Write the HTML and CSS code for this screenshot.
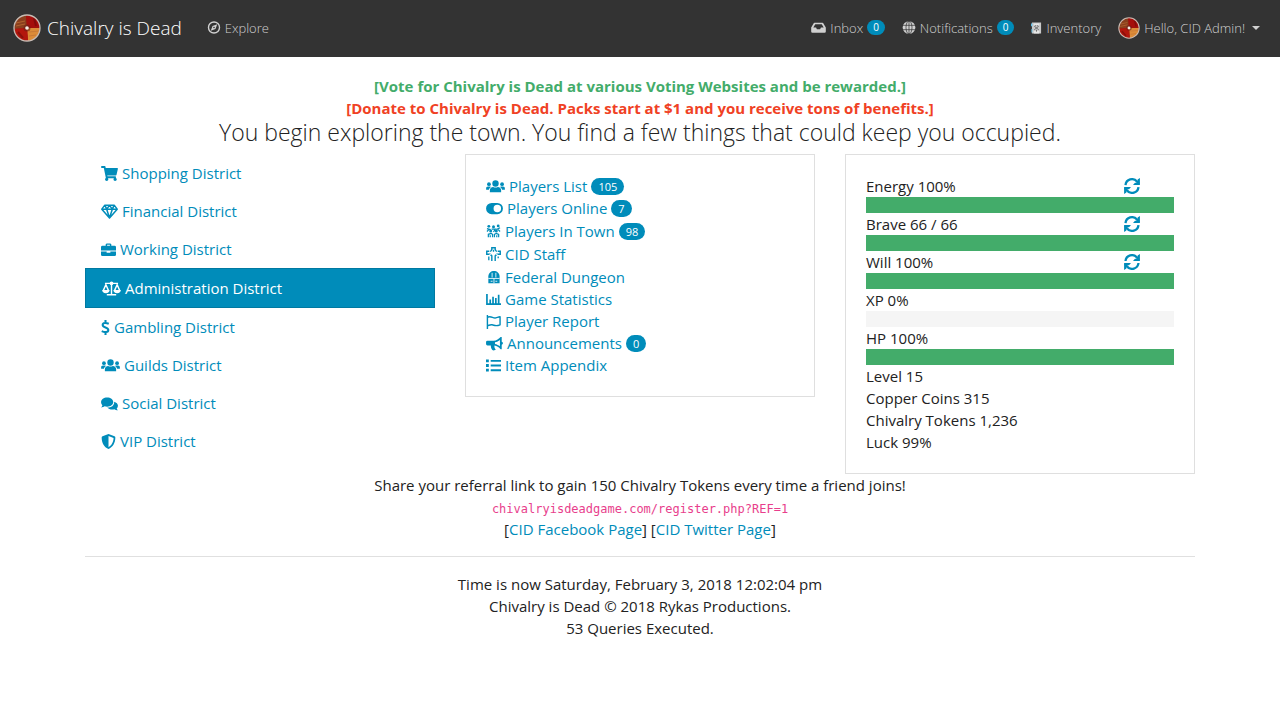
FILE: index.html
```html
<!DOCTYPE html>
<html lang="en">
<head>
<meta charset="utf-8">
<meta name="viewport" content="width=device-width, initial-scale=1">
<title>Chivalry is Dead</title>
<link rel="stylesheet" href="styles.css">
</head>
<body>
<svg class="sprite" aria-hidden="true">
  <symbol id="crest" viewBox="0 0 28 28">
    <circle cx="14" cy="14" r="13" fill="#9c1510"/>
    <path d="M14 14L1 15A13 13 0 0 1 13 1z" fill="#8a3f1e"/>
    <path d="M14 14L13 1A13 13 0 0 1 27 13z" fill="#a50f0c"/>
    <path d="M14 14L27 14A13 13 0 0 1 15 27z" fill="#dc8c38"/>
    <path d="M14 14L15 27A13 13 0 0 1 1 15z" fill="#b3160d"/>
    <path d="M3 9l9-2M3 12l9-2M16 18l10-1M16 22l7-1" stroke="#c27235" stroke-width="1" opacity=".7"/>
    <path d="M21 4l2 8M5 18l5 6" stroke="#650909" stroke-width="2" opacity=".5"/>
    <circle cx="14" cy="14" r="3.500" fill="#692119" opacity=".6"/>
    <circle cx="14" cy="14" r="1.800" fill="#f5efe5"/>
    <circle cx="14" cy="14" r="13" fill="none" stroke="#c8bcb4" stroke-width="1.300"/>
  </symbol>
  <symbol id="compass" viewBox="0 0 16 16">
    <circle cx="8" cy="8" r="6.800" fill="none" stroke="currentColor" stroke-width="1.700"/>
    <path fill="currentColor" fill-rule="evenodd" d="M12 4L9.800 9.800 4 12l2.200-5.800zM8 7a1 1 0 1 0 0 2 1 1 0 0 0 0-2z"/>
  </symbol>
  <symbol id="inbox" viewBox="0 0 18 16">
    <path fill="currentColor" fill-rule="evenodd" d="M4.200 2h9.600l.9.600L18 8v5a1.500 1.500 0 0 1-1.500 1.500h-15A1.500 1.500 0 0 1 0 13V8l3.300-5.400zM5 4L2.600 8H6l1 2h4l1-2h3.400L13 4z"/>
  </symbol>
  <symbol id="globe" viewBox="0 0 16 16">
    <circle cx="8" cy="8" r="7.800" fill="currentColor"/>
    <path d="M0 5.300h16M0 10.700h16M8 0v16" stroke="#333" stroke-width=".9"/>
    <ellipse cx="8" cy="8" rx="3.700" ry="8" fill="none" stroke="#333" stroke-width=".9"/>
  </symbol>
  <symbol id="chest" viewBox="0 0 12 14">
    <path fill="#c9c9c9" d="M1 1h10v12H1z"/>
    <path fill="#62c0e8" d="M0 2h1.500v3H0zM.5 8h1v4h-1z"/>
    <path fill="#e6e6e6" d="M3 2h6v2H3zM3 10h6v3H3z"/>
    <path d="M3.500 5l5 4M8.500 5l-5 4M5 4v1M7 4v1M6 9v2" stroke="#666" stroke-width="1"/>
  </symbol>
  <symbol id="cart" viewBox="0 0 576 512">
    <path fill="currentColor" d="M528.120 301.319l47.273-208C578.806 78.301 567.391 64 551.990 64H159.208l-9.166-44.810C147.758 8.021 137.930 0 126.529 0H24C10.745 0 0 10.745 0 24v16c0 13.255 10.745 24 24 24h69.883l70.248 343.435C147.325 417.100 136 435.222 136 456c0 30.928 25.072 56 56 56s56-25.072 56-56c0-15.674-6.447-29.835-16.824-40h209.647C430.447 426.165 424 440.326 424 456c0 30.928 25.072 56 56 56s56-25.072 56-56c0-22.172-12.888-41.332-31.579-50.405l5.517-24.276c3.413-15.018-8.002-29.319-23.403-29.319H218.117l-6.545-32h293.145c11.206 0 20.920-7.754 23.403-18.681z"/>
  </symbol>
  <symbol id="gem" viewBox="0 0 18 16">
    <path fill="none" stroke="currentColor" stroke-width="1.600" stroke-linejoin="round" d="M4 1.200h10L17.200 5.500 9 15 .8 5.500zM1 5.500h16M4 1.200l2 4.300L9 15l3-9.500 2-4.300M6 5.500l3-4 3 4"/>
  </symbol>
  <symbol id="briefcase" viewBox="0 0 16 16">
    <path fill="currentColor" fill-rule="evenodd" d="M5 4V2.500L6 1.500h4l1 1V4h3.500A1.500 1.500 0 0 1 16 5.500V9H0V5.500A1.500 1.500 0 0 1 1.500 4zM6.500 3v1h3V3zM0 10h6v1.500h4V10h6v3.500a1.500 1.500 0 0 1-1.500 1.500h-13A1.500 1.500 0 0 1 0 13.500z"/>
  </symbol>
  <symbol id="scale" viewBox="0 0 20 16">
    <path fill="none" stroke="currentColor" stroke-width="1.500" d="M3 2.500h14M10 1v13M5 14.700h10M1.300 10L4 4l2.700 6M13.300 10L16 4l2.700 6"/>
    <circle cx="10" cy="2.500" r="2" fill="currentColor"/>
    <path fill="currentColor" d="M0 9.500h8c0 2-1.600 3.500-4 3.500S0 11.500 0 9.500zM12 9.500h8c0 2-1.600 3.500-4 3.500s-4-1.500-4-3.500z"/>
  </symbol>
  <symbol id="dollar" viewBox="0 0 9 16">
    <path fill="none" stroke="currentColor" stroke-width="2.200" d="M8 4C5 2.700 1.500 2.700 1.500 5.300c0 3 6 2.300 6 5.300 0 2.800-4 2.800-7 1.300M4.500 0v3.500M4.500 12.500V16"/>
  </symbol>
  <symbol id="users" viewBox="0 0 20 16">
    <g fill="currentColor"><circle cx="10" cy="4.800" r="3.400"/><circle cx="3" cy="5.500" r="2"/><circle cx="17" cy="5.500" r="2"/>
    <path d="M4 14v-2c0-2 1.500-3.500 3.500-3.500C9 9.300 11 9.300 12.500 8.500 14.500 8.500 16 10 16 12v2zM0 11.500V10c0-1.200.8-2 2-2h2c.5 0 1 .2 1.300.5C4 9.200 3.200 10.200 3 11.500zM20 11.500V10c0-1.200-.8-2-2-2h-2c-.5 0-1 .2-1.300.5 1.300.7 2.100 1.700 2.300 3z"/></g>
  </symbol>
  <symbol id="comments" viewBox="0 0 18 16">
    <path fill="currentColor" d="M6.500 1.500C10.100 1.500 13 3.700 13 6.500s-2.900 5-6.500 5c-1 0-1.900-.2-2.700-.5-1 .7-2.300 1.200-3.800 1.200.7-.7 1.200-1.400 1.400-2.300C.5 9 0 7.800 0 6.500c0-2.800 2.900-5 6.500-5zM14 6c2.400.7 4 2.300 4 4.300 0 1.200-.5 2.200-1.300 3 .2.800.7 1.400 1.300 2-1.500 0-2.800-.5-3.700-1.100-.8.300-1.600.3-2.300.3-2.300 0-4.300-.9-5.400-2.200C10.900 12.300 14.300 10.200 14 6z"/>
  </symbol>
  <symbol id="shield" viewBox="0 0 16 16">
    <path fill="currentColor" fill-rule="evenodd" d="M8 0l6.400 2.500c.6.200.9.700.9 1.300 0 6-3 10.300-6.700 12a2 2 0 0 1-1.200 0C3.700 14.300.7 10 .7 3.800c0-.6.300-1.100.9-1.300zM8 2v12c2.800-1.400 5.200-5 5.400-9.800z"/>
  </symbol>
  <symbol id="toggle" viewBox="0 0 18 16">
    <path fill="currentColor" fill-rule="evenodd" d="M6 2h6a6 6 0 0 1 0 12H6A6 6 0 0 1 6 2zM12 4a4 4 0 1 0 0 8 4 4 0 0 0 0-8z"/>
  </symbol>
  <symbol id="crowd" viewBox="0 0 16 16">
    <g fill="currentColor"><circle cx="3" cy="2.500" r="1.500"/><circle cx="8" cy="3" r="1.600"/><circle cx="13" cy="2" r="1.500"/><circle cx="5" cy="7.500" r="1.600"/><circle cx="11" cy="7.500" r="1.600"/></g>
    <path fill="none" stroke="currentColor" stroke-width="1.300" d="M1 5l4 1M15 4l-4 2M6 5.500h4l-2 3M1 8l2-2M13 6l2 2M2.500 14v-3l3-1 1.500 1v3M9 14v-3l2-1 2.500 1v3M4.500 12v2M11.500 12v2"/>
  </symbol>
  <symbol id="cross" viewBox="0 0 16 16">
    <path fill="none" stroke="currentColor" stroke-width="1.500" d="M6.200 15V9.500L4.500 7.800H.8V4.500h4L6.200 3V.8h3.600V3l1.400 1.500h4v3.300h-3.700L9.800 9.500V15"/>
    <path fill="none" stroke="currentColor" stroke-width="1.400" d="M3 10v4M13 10v2M8 3v2"/>
    <path stroke="#fff" stroke-width="1" d="M4 3v3M12 3v3M3 9l3-2M13 9l-3-2"/>
  </symbol>
  <symbol id="dungeon" viewBox="0 0 16 16">
    <path fill="currentColor" d="M2.500 14V7c0-8 12-8 12 0v7z"/>
    <path fill="none" stroke="#fff" stroke-width=".9" d="M6.500 3v5M10.500 3v5M2.500 9h12M5 12h2M10 12h2M8.500 9v5"/>
  </symbol>
  <symbol id="chart" viewBox="0 0 16 16">
    <path fill="none" stroke="currentColor" stroke-width="1.800" d="M1 2v11h15M4.500 12V8M7.500 12V5M10.500 12V6.500M13.500 12V3"/>
  </symbol>
  <symbol id="flag" viewBox="0 0 16 16">
    <path fill="none" stroke="currentColor" stroke-width="1.500" stroke-linejoin="round" d="M1.500 1v15M1.500 3.500c4-2 6 1.500 9 .6 1.700-.4 2.800-.9 4.500-1.100v8.500c-5 2-6 .3-8.500 0-2-.2-3 .3-5 1"/>
  </symbol>
  <symbol id="bullhorn" viewBox="0 0 18 16">
    <path fill="currentColor" fill-rule="evenodd" d="M1.500 5H8c3-.1 5.800-2 7.500-4h1.200v5.200c1.700.4 1.700 2.600 0 3V14h-1.200c-1.700-2-4.200-3.500-6.500-3.800-.3 2 .4 3.300 1.500 4.300-.8 1-3 1.100-3.800.5C5.500 13.700 5 12 5.100 10H1.500A1.500 1.500 0 0 1 0 8.500v-2A1.500 1.500 0 0 1 1.500 5zM9.500 6.700v1.800c2 .4 3.800 1.300 5.300 2.500V4.200c-1.500 1.300-3.300 2.100-5.300 2.500z"/>
  </symbol>
  <symbol id="list" viewBox="0 0 16 16">
    <path fill="currentColor" d="M0 1.500h3v3H0zM0 6.500h3v3H0zM0 11.500h3v3H0zM5 2h11v2H5zM5 7h11v2H5zM5 12h11v2H5z"/>
  </symbol>
  <symbol id="refresh" viewBox="0 0 16 16">
    <path fill="none" stroke="currentColor" stroke-width="2.300" d="M1.500 7A6.500 6.500 0 0 1 13 3.600L15 6M14.500 9A6.500 6.500 0 0 1 3 12.400L1 10"/>
    <path fill="currentColor" d="M15.900 0v7H9l2-2.300h2.600V1.500zM.1 16V9H7l-2 2.300H2.400v3.200z"/>
  </symbol>
</svg>

<header class="navbar">
  <a class="brand" href="#"><svg class="logo"><use href="#crest"/></svg>Chivalry is Dead</a>
  <nav class="nav-main">
    <a class="nav-link" href="#"><svg class="nav-icon"><use href="#compass"/></svg>Explore</a>
  </nav>
  <nav class="nav-user">
    <a class="nav-link" href="#"><svg class="nav-icon wide"><use href="#inbox"/></svg>Inbox <span class="badge">0</span></a>
    <a class="nav-link" href="#"><svg class="nav-icon"><use href="#globe"/></svg>Notifications <span class="badge">0</span></a>
    <a class="nav-link" href="#"><svg class="nav-icon narrow"><use href="#chest"/></svg>Inventory</a>
    <button class="nav-link" type="button"><svg class="avatar"><use href="#crest"/></svg>Hello, CID Admin!<span class="caret"></span></button>
  </nav>
</header>

<main class="container">
  <div class="notices">
    <a class="notice vote" href="#">[Vote for Chivalry is Dead at various Voting Websites and be rewarded.]</a>
    <a class="notice donate" href="#">[Donate to Chivalry is Dead. Packs start at $1 and you receive tons of benefits.]</a>
  </div>
  <h1 class="title">You begin exploring the town. You find a few things that could keep you occupied.</h1>

  <div class="columns">
    <nav class="districts">
      <a class="district" href="#"><svg class="icon w17"><use href="#cart"/></svg>Shopping District</a>
      <a class="district" href="#"><svg class="icon w17"><use href="#gem"/></svg>Financial District</a>
      <a class="district" href="#"><svg class="icon"><use href="#briefcase"/></svg>Working District</a>
      <a class="district active" href="#"><svg class="icon w19"><use href="#scale"/></svg>Administration District</a>
      <a class="district" href="#"><svg class="icon w9"><use href="#dollar"/></svg>Gambling District</a>
      <a class="district" href="#"><svg class="icon w19"><use href="#users"/></svg>Guilds District</a>
      <a class="district" href="#"><svg class="icon w17"><use href="#comments"/></svg>Social District</a>
      <a class="district" href="#"><svg class="icon"><use href="#shield"/></svg>VIP District</a>
    </nav>

    <section class="card">
      <ul class="links">
        <li><a href="#"><svg class="icon w19"><use href="#users"/></svg>Players List <span class="badge">105</span></a></li>
        <li><a href="#"><svg class="icon w17"><use href="#toggle"/></svg>Players Online <span class="badge">7</span></a></li>
        <li class="tall"><a href="#"><svg class="icon"><use href="#crowd"/></svg>Players In Town <span class="badge">98</span></a></li>
        <li class="tall"><a href="#"><svg class="icon"><use href="#cross"/></svg>CID Staff</a></li>
        <li class="tall"><a href="#"><svg class="icon"><use href="#dungeon"/></svg>Federal Dungeon</a></li>
        <li><a href="#"><svg class="icon"><use href="#chart"/></svg>Game Statistics</a></li>
        <li><a href="#"><svg class="icon"><use href="#flag"/></svg>Player Report</a></li>
        <li><a href="#"><svg class="icon w17"><use href="#bullhorn"/></svg>Announcements <span class="badge">0</span></a></li>
        <li><a href="#"><svg class="icon"><use href="#list"/></svg>Item Appendix</a></li>
      </ul>
    </section>

    <section class="card">
      <div class="stat"><span>Energy 100%</span><a href="#" aria-label="Refill energy"><svg class="refresh"><use href="#refresh"/></svg></a></div>
      <div class="progress"><div class="bar" style="width:100%"></div></div>
      <div class="stat"><span>Brave 66 / 66</span><a href="#" aria-label="Refill brave"><svg class="refresh"><use href="#refresh"/></svg></a></div>
      <div class="progress"><div class="bar" style="width:100%"></div></div>
      <div class="stat"><span>Will 100%</span><a href="#" aria-label="Refill will"><svg class="refresh"><use href="#refresh"/></svg></a></div>
      <div class="progress"><div class="bar" style="width:100%"></div></div>
      <div class="stat"><span>XP 0%</span></div>
      <div class="progress"><div class="bar" style="width:0%"></div></div>
      <div class="stat"><span>HP 100%</span></div>
      <div class="progress"><div class="bar" style="width:100%"></div></div>
      <div>Level 15</div>
      <div>Copper Coins 315</div>
      <div>Chivalry Tokens 1,236</div>
      <div>Luck 99%</div>
    </section>
  </div>

  <div class="referral">
    <div>Share your referral link to gain 150 Chivalry Tokens every time a friend joins!</div>
    <div class="code-line"><code>chivalryisdeadgame.com/register.php?REF=1</code></div>
    <div>[<a href="#">CID Facebook Page</a>] [<a href="#">CID Twitter Page</a>]</div>
  </div>
  <hr>
  <footer class="footer">
    <div>Time is now Saturday, February 3, 2018 12:02:04 pm</div>
    <div>Chivalry is Dead © 2018 Rykas Productions.</div>
    <div>53 Queries Executed.</div>
  </footer>
</main>
</body>
</html>
```
FILE: styles.css
```css
* { box-sizing: border-box; }

body {
  margin: 0;
  background: #fff;
  color: #222;
  font-family: "Open Sans", "Noto Sans", sans-serif;
  font-size: 15px;
  line-height: 22px;
}

a { color: #008cba; text-decoration: none; }
.sprite { position: absolute; width: 0; height: 0; }

.navbar {
  display: flex;
  align-items: center;
  min-height: 57px;
  padding: 0 20px 2px 13px;
  background: #333;
  font-weight: 300;
}
.brand {
  display: flex;
  align-items: center;
  gap: 6px;
  margin-right: 25px;
  color: #fff;
  font-size: 19px;
  line-height: 28px;
}
.logo { width: 28px; height: 28px; }
.nav-main { flex: 1; display: flex; }
.nav-user { display: flex; align-items: center; gap: 17px; }
.nav-link {
  display: flex;
  align-items: center;
  gap: 4px;
  padding: 0;
  border: 0;
  background: none;
  color: #d0d0d0;
  font-family: inherit;
  font-size: 13px;
  font-weight: inherit;
  line-height: 20px;
}
.nav-icon { width: 14px; height: 13px; }
.nav-icon.wide { width: 15px; }
.nav-icon.narrow { width: 11px; height: 14px; }
.avatar { width: 22px; height: 22px; }
.caret {
  margin-left: 3px;
  border-top: 4px solid currentColor;
  border-left: 4px solid transparent;
  border-right: 4px solid transparent;
}

.badge {
  display: inline-block;
  padding: 0 7px;
  border-radius: 10px;
  background: #008cba;
  color: #fff;
  font-size: 11px;
  font-weight: 400;
  line-height: 17px;
}
.navbar .badge { padding: 0 6px; font-size: 10px; line-height: 15px; }

.container {
  max-width: 1140px;
  margin: 0 auto;
  padding: 18px 15px;
}
.notices { display: flex; flex-direction: column; align-items: center; }
.notice { font-weight: 700; }
.vote { color: #43ac6a; }
.donate { color: #f04124; }
.title {
  margin: 0 0 9px;
  font-size: 23px;
  font-weight: 300;
  line-height: 26px;
  text-align: center;
}

.columns {
  display: grid;
  grid-template-columns: repeat(3, 1fr);
  gap: 30px;
  align-items: start;
}
.districts { display: flex; flex-direction: column; }
.district { display: flex; align-items: center; gap: 4px; padding: 8px 16px; }
.district.active {
  border: 1px solid #0079a1;
  background: #008cba;
  color: #fff;
}
.icon { flex: none; width: 15px; height: 15px; }
.w9 { width: 9px; }
.w17 { width: 17px; }
.w19 { width: 19px; }

.card { padding: 20px; border: 1px solid #dfdfdf; }
.links { margin: 0; padding: 0; list-style: none; }
.links a { display: flex; align-items: center; gap: 4px; }
.links .tall { padding-top: 1px; }

.stat { display: grid; grid-template-columns: 1fr 50px; }
.stat a { display: flex; align-items: center; }
.refresh { width: 16px; height: 16px; }
.progress { height: 16px; background: #f5f5f5; }
.bar { height: 100%; background: #43ac6a; }

.referral, .footer { text-align: center; }
code {
  color: #e83e8c;
  font-family: "DejaVu Sans Mono", monospace;
  font-size: 12px;
}
.code-line { height: 22px; }
hr { margin: 16px 0; border: 0; border-top: 1px solid #e0e0e0; }
```
